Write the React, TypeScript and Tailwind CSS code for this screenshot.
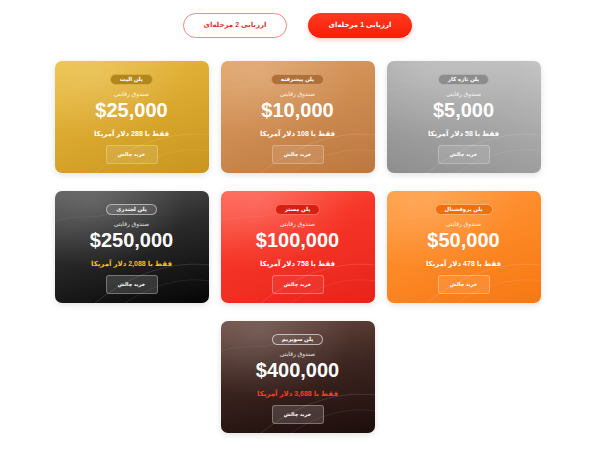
import React from 'react';

interface Plan {
  id: string;
  name: string;
  price: string;
  cost: string;
  card: string;
  badge: string;
  button: string;
  costColor: string;
}

const plans: Plan[] = [
  {
    id: 'starter',
    name: 'پلن تازه کار',
    price: '$5,000',
    cost: '58',
    card: 'bg-[linear-gradient(200deg,#c4c4c4_0%,#a8a8a8_45%,#8e8e8e_100%)]',
    badge: 'bg-[#8c8c8c] border-[#b0b0b0]',
    button: 'bg-white/10 border-white/25',
    costColor: 'text-white',
  },
  {
    id: 'advanced',
    name: 'پلن پیشرفته',
    price: '$10,000',
    cost: '108',
    card: 'bg-[linear-gradient(160deg,#e0a266_0%,#cf8d52_45%,#bb773f_100%)]',
    badge: 'bg-[#b0703a] border-[#d59c68]',
    button: 'bg-white/10 border-white/25',
    costColor: 'text-white',
  },
  {
    id: 'elite',
    name: 'پلن الیت',
    price: '$25,000',
    cost: '288',
    card: 'bg-[linear-gradient(160deg,#ecc145_0%,#dcaa30_45%,#c8951e_100%)]',
    badge: 'bg-[#b3861c] border-[#d6ad3e]',
    button: 'bg-white/10 border-white/25',
    costColor: 'text-white',
  },
  {
    id: 'pro',
    name: 'پلن پروفشنال',
    price: '$50,000',
    cost: '478',
    card: 'bg-[linear-gradient(160deg,#ff9c40_0%,#fd8a28_45%,#f77812_100%)]',
    badge: 'bg-[#f06e0c] border-[#ffae6a]',
    button: 'bg-white/10 border-white/30',
    costColor: 'text-white',
  },
  {
    id: 'master',
    name: 'پلن مستر',
    price: '$100,000',
    cost: '758',
    card: 'bg-[linear-gradient(160deg,#ff6050_0%,#f63628_40%,#e8231a_100%)]',
    badge: 'bg-[#d81f14] border-[#ff6a5a]',
    button: 'bg-white/5 border-white/30',
    costColor: 'text-white',
  },
  {
    id: 'legendary',
    name: 'پلن لجندری',
    price: '$250,000',
    cost: '2,088',
    card: 'bg-[linear-gradient(165deg,#585858_0%,#2a2a2a_45%,#050505_100%)]',
    badge: 'bg-white/10 border-white/50',
    button: 'bg-white/15 border-white/30',
    costColor: 'text-[#f5c21b]',
  },
  {
    id: 'supreme',
    name: 'پلن سوپریم',
    price: '$400,000',
    cost: '3,688',
    card: 'bg-[linear-gradient(170deg,#6a4a41_0%,#3e2621_45%,#1c0d0b_100%)]',
    badge: 'bg-white/5 border-white/60',
    button: 'bg-white/15 border-white/30',
    costColor: 'text-[#ff3d22]',
  },
];

const fa = { fontFamily: '"Liberation Sans", "DejaVu Sans", sans-serif' };

function PlanCard({ plan }: { plan: Plan }) {
  return (
    <div
      className={`relative w-[154px] h-[112px] rounded-[7px] overflow-hidden flex flex-col items-center pt-[13px] text-white shadow-[0_2px_6px_rgba(0,0,0,0.12)] ${plan.card}`}
    >
      {/* soft highlight + curved lines */}
      <svg className="absolute inset-0 w-full h-full pointer-events-none" viewBox="0 0 154 112">
        <defs>
          <radialGradient id={`hl-${plan.id}`} cx="0.25" cy="0.1" r="0.6">
            <stop offset="0" stopColor="#fff" stopOpacity="0.15" />
            <stop offset="1" stopColor="#fff" stopOpacity="0" />
          </radialGradient>
        </defs>
        <rect width="154" height="112" fill={`url(#hl-${plan.id})`} />
        <path d="M40 112 C 80 80, 120 70, 154 74" stroke="#fff" strokeOpacity="0.12" strokeWidth="1" fill="none" />
        <path d="M70 112 C 100 92, 130 86, 154 90" stroke="#fff" strokeOpacity="0.08" strokeWidth="1" fill="none" />
        <path d="M0 30 C 30 20, 50 35, 70 10" stroke="#fff" strokeOpacity="0.06" strokeWidth="1" fill="none" />
      </svg>

      <div
        className={`relative h-[11px] px-[9px] rounded-full border-[0.5px] flex items-center text-[5.5px] font-bold leading-none ${plan.badge}`}
      >
        {plan.name}
      </div>
      <div className="relative mt-[5px] h-[8px] flex items-center text-[6px] leading-none text-white/85">
        صندوق رقابتی
      </div>
      <div className="relative mt-[2px] text-[20px] leading-none font-bold" style={{ fontFamily: '"Liberation Sans", Arial, sans-serif' }} dir="ltr">
        {plan.price}
      </div>
      <div className={`relative mt-[8px] h-[10px] flex items-center text-[7px] font-bold leading-none ${plan.costColor}`}>
        فقط با {plan.cost} دلار آمریکا
      </div>
      <button
        className={`relative mt-[7px] w-[52px] h-[19px] rounded-[3px] border-[0.5px] flex items-center justify-center text-[5px] font-bold text-white ${plan.button}`}
      >
        خرید چالش
      </button>
    </div>
  );
}

export default function App() {
  return (
    <div dir="rtl" className="min-h-screen w-[602px] h-[457px] bg-white" style={fa}>
      <div className="pr-[7px] pt-[13px]">
        <div className="flex justify-center gap-[21px]">
          <button className="w-[104px] h-[25px] rounded-full bg-[linear-gradient(180deg,#ff3a1e_0%,#f81c0a_100%)] text-white text-[7px] font-bold shadow-[0_2px_4px_rgba(255,40,20,0.25)]">
            ارزیابی 1 مرحله‌ای
          </button>
          <button className="w-[104px] h-[25px] rounded-full border border-[#ee8a86] bg-white text-[#e0332e] text-[7px] font-bold">
            ارزیابی 2 مرحله‌ای
          </button>
        </div>

        <div className="mx-auto mt-[23px] w-[486px] flex flex-wrap justify-center gap-x-[12px] gap-y-[18px]">
          {plans.map(plan => (
            <PlanCard key={plan.id} plan={plan} />
          ))}
        </div>
      </div>
    </div>
  );
}
